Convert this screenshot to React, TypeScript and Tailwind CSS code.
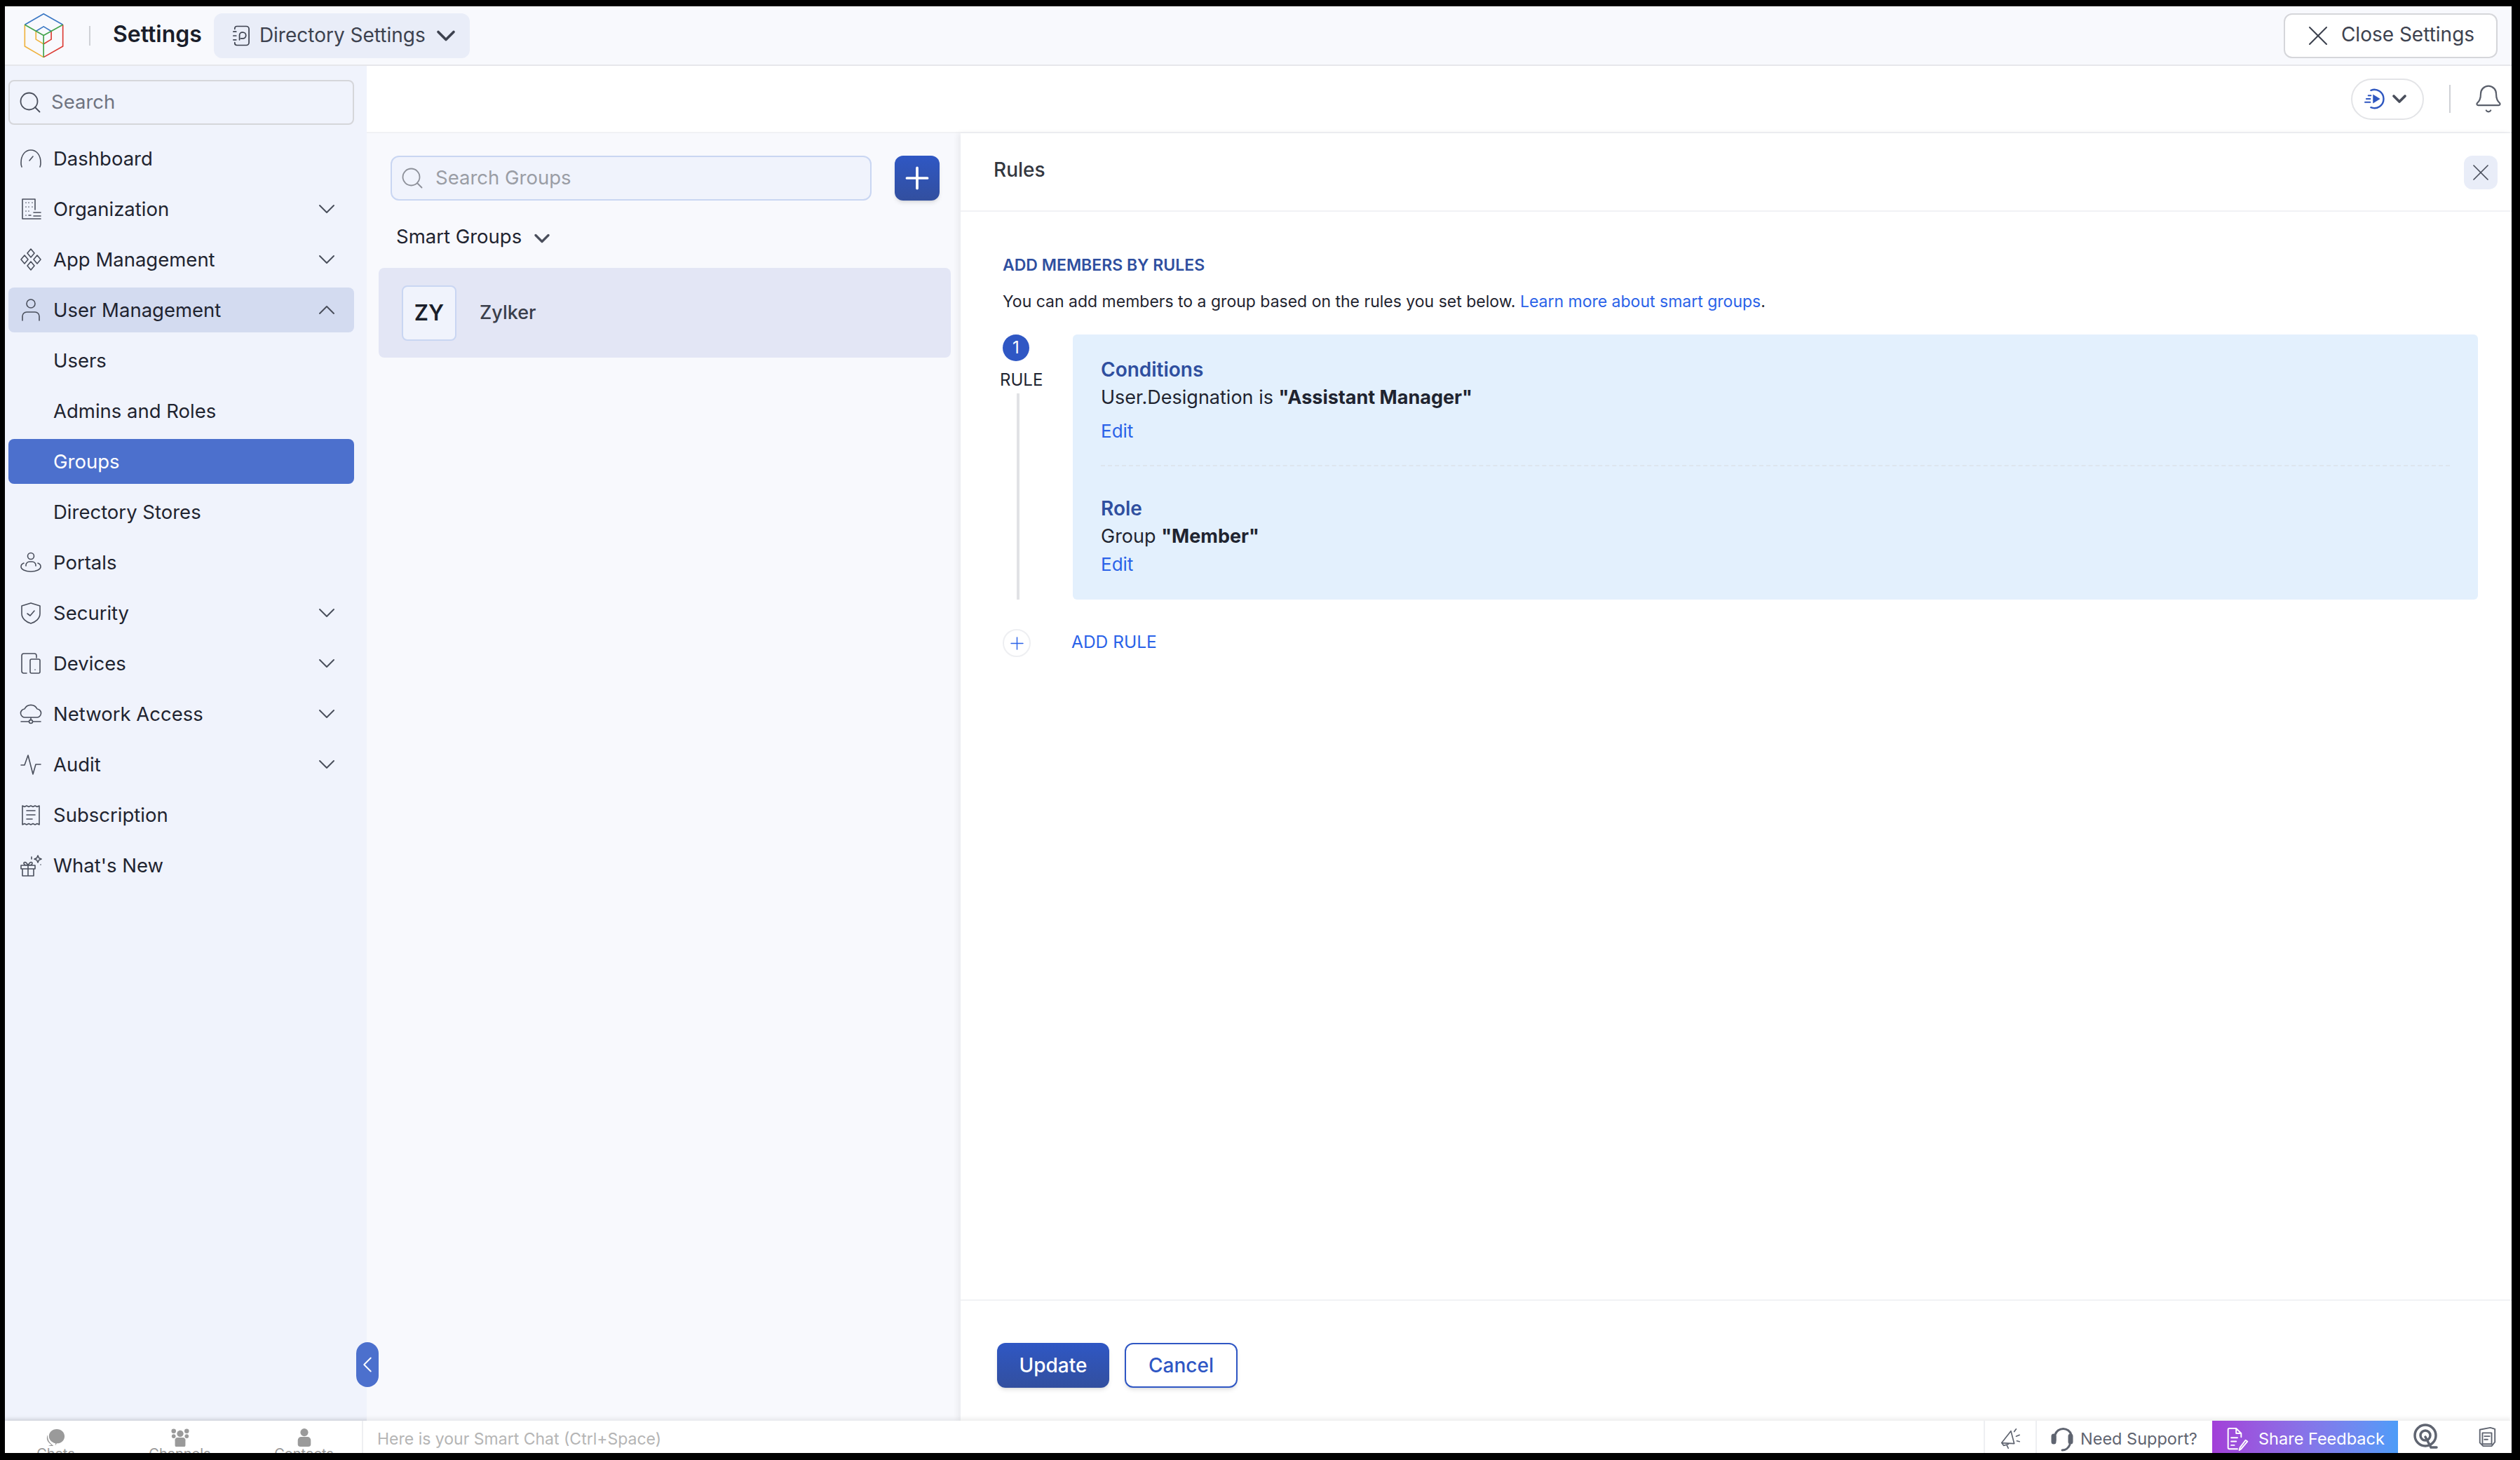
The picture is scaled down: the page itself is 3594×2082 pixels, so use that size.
import { Bell, ChevronDown, ChevronLeft, ChevronUp, Plus, Search, X } from "lucide-react";
import type { ReactNode } from "react";

type NavItem = {
	label: string;
	icon?: ReactNode;
	arrow?: "down" | "up";
	state?: "open" | "active";
};

function Ico({ children }: { children: ReactNode }) {
	return (
		<svg
			viewBox="0 0 32 32"
			fill="none"
			stroke="#4a4f5c"
			strokeWidth="1.6"
			strokeLinecap="round"
			strokeLinejoin="round"
			className="w-8 h-8 shrink-0"
		>
			{children}
		</svg>
	);
}

const navItems: NavItem[] = [
	{
		label: "Dashboard",
		icon: (
			<Ico>
				<path d="M3 28a13.500 13.500 0 0 1-1-6C2 11 8 4 16 4s14 7 14 18a13.500 13.500 0 0 1-1 6M14 19l5-6" />
			</Ico>
		),
	},
	{
		label: "Organization",
		arrow: "down",
		icon: (
			<Ico>
				<path d="M22 17V2H4v28h26M9 7v.1M13 7v.1M18 7v.1M9 13v.1M13 13v.1M18 13v.1M9 19v.1M13 19v.1M9 25v.1M20 21h10M20 26h10M13 25h3" />
			</Ico>
		),
	},
	{
		label: "App Management",
		arrow: "down",
		icon: (
			<Ico>
				<path d="M16 1l5 6-5 6-5-6zM16 19l5 6-5 6-5-6zM7 10l5 6-5 6-5-6zM25 10l5 6-5 6-5-6z" />
			</Ico>
		),
	},
	{
		label: "User Management",
		arrow: "up",
		state: "open",
		icon: (
			<Ico>
				<circle cx="16" cy="7" r="6" />
				<path d="M4 31v-6a6 6 0 0 1 6-6h12a6 6 0 0 1 6 6v6" />
			</Ico>
		),
	},
	{ label: "Users" },
	{ label: "Admins and Roles" },
	{ label: "Groups", state: "active" },
	{ label: "Directory Stores" },
	{
		label: "Portals",
		icon: (
			<Ico>
				<circle cx="16" cy="7" r="4.500" />
				<path d="M9 21v-1a5 5 0 0 1 5-5h4a5 5 0 0 1 5 5v1M6 17c-3 1-4 3-4 5 0 4 6 7 14 7s14-3 14-7c0-2-1-4-4-5" />
			</Ico>
		),
	},
	{
		label: "Security",
		arrow: "down",
		icon: (
			<Ico>
				<path d="M16 2l13 4v11c0 7-6 12-13 14C9 29 3 24 3 17V6zM11 17l4 3 6-7" />
			</Ico>
		),
	},
	{
		label: "Devices",
		arrow: "down",
		icon: (
			<Ico>
				<path d="M10 30H6a3 3 0 0 1-3-3V5a3 3 0 0 1 3-3h15a3 3 0 0 1 3 3v3" />
				<rect x="15" y="10" width="14" height="20" rx="2" />
				<path d="M22 25v.1" />
			</Ico>
		),
	},
	{
		label: "Network Access",
		arrow: "down",
		icon: (
			<Ico>
				<path d="M8 21a6 6 0 0 1-1-12 10 10 0 0 1 18 0 6 6 0 0 1-1 12zM16 21v4M2 27h11M19 27h11" />
				<circle cx="16" cy="27" r="2.500" />
			</Ico>
		),
	},
	{
		label: "Audit",
		arrow: "down",
		icon: (
			<Ico>
				<path d="M2 17h5l5-14 7 27 4-14h7" />
			</Ico>
		),
	},
	{
		label: "Subscription",
		icon: (
			<Ico>
				<path d="M4 3l3 1.500 3-1.500 3 1.500 3-1.500 3 1.500 3-1.500 3 1.500 3-1.500v27l-3-1.500-3 1.500-3-1.500-3 1.500-3-1.500-3 1.500-3-1.500-3 1.500zM10 10h12M10 16h12M10 22h8" />
			</Ico>
		),
	},
	{
		label: "What's New",
		icon: (
			<Ico>
				<path d="M2 16h20v5H2zM4 21v10h16V21M12 16v15M12 16c-3 0-6-1-6-3s3-3 6 3c3-6 6-5 6-3s-3 3-6 3" />
				<path d="M26 2l1.500 3.500L31 7l-3.500 1.500L26 12l-1.500-3.500L21 7l3.500-1.500zM17 4v3M30 15v.1" />
			</Ico>
		),
	},
];

function NavRow({ item }: { item: NavItem }) {
	const bg =
		item.state === "active"
			? "bg-[#4c70cd] text-white"
			: item.state === "open"
				? "bg-[#d3dbf0] text-[#1f2430]"
				: "text-[#1f2430]";
	return (
		<div className={`flex items-center h-16 rounded-lg pl-[16px] pr-[19px] ${bg}`}>
			<div className="w-[48px] shrink-0">{item.icon}</div>
			<span className="flex-1 pt-[1px] text-[27.5px]">{item.label}</span>
			{item.arrow === "down" && <ChevronDown className="w-10 h-10 text-[#4a4f5c]" strokeWidth={1.2} />}
			{item.arrow === "up" && <ChevronUp className="w-10 h-10 text-[#4a4f5c]" strokeWidth={1.2} />}
		</div>
	);
}

function Logo() {
	return (
		<svg viewBox="100 45 172 196" fill="none" strokeWidth="5" strokeLinejoin="round" className="w-[57px] h-[65px]">
			<path d="M104 97L185 50L268 97" stroke="#3b78c4" />
			<path d="M152 125L185 105L218 125" stroke="#3b78c4" />
			<path d="M152 125V160L185 180" stroke="#efb23e" />
			<path d="M104 97V190L185 237" stroke="#efb23e" />
			<path d="M268 97V190L185 237" stroke="#dc3b34" />
			<path d="M218 125V160L185 180" stroke="#dc3b34" />
			<path d="M104 97L185 143L268 97M185 143V237" stroke="#43a34b" />
		</svg>
	);
}

function Header() {
	return (
		<header className="flex items-center h-[85px] shrink-0 bg-[#f8f9fd] border-b-2 border-[#e6e7eb] pl-[27px] pr-5">
			<Logo />
			<div className="w-[2px] h-7 bg-[#cfd1d6] ml-[36px] mr-[32px]" />
			<span className="text-[32px] pb-[3px] font-semibold text-[#1a1e2a]">Settings</span>
			<div className="flex items-center h-16 w-[365px] ml-[17px] pl-[25px] rounded-xl bg-[#e9edf8]">
				<svg viewBox="0 0 28 32" fill="none" stroke="#3d424f" strokeWidth="1.8" strokeLinecap="round" className="w-[27px] h-8">
					<path d="M5 6V5a3 3 0 0 1 3-3h14a4 4 0 0 1 4 4v20a4 4 0 0 1-4 4H8a3 3 0 0 1-3-3v-1M3 10h4M3 16h4M3 22h4M12 22v-7a4 4 0 0 1 4-4h1a4 4 0 0 1 0 9h-3" />
				</svg>
				<span className="ml-[13px] pb-[2px] text-[28px] text-[#3d424f]">Directory Settings</span>
				<ChevronDown className="w-11 h-11 ml-[7px] text-[#3d424f]" strokeWidth={2} />
			</div>
			<div className="ml-auto flex items-center justify-center gap-[9px] w-[305px] h-16 pr-[8px] rounded-xl bg-white border-2 border-[#d5d6da]">
				<X className="w-12 h-12 text-[#3d424f]" strokeWidth={1} />
				<span className="text-[28px] pb-[3px] text-[#3d424f]">Close Settings</span>
			</div>
		</header>
	);
}

function Toolbar() {
	return (
		<div className="flex items-center justify-end h-[96px] shrink-0 bg-white border-b-2 border-[#f1f2f5] pr-[11px]">
			<div className="flex items-center justify-center gap-[2px] w-[104px] h-[59px] rounded-full border-2 border-[#e3e4e7]">
				<svg viewBox="0 0 34 34" fill="none" stroke="#2f57c0" strokeWidth="2.6" strokeLinecap="round" className="w-8 h-8">
					<path d="M10 4a14 14 0 1 1 0 26" />
					<path d="M13 10l11 7-11 7z" fill="#2f57c0" stroke="none" />
					<path d="M6 12h4M3 17h6M1 22h8" strokeWidth="2" />
				</svg>
				<ChevronDown className="w-8 h-8 text-[#4a4f5c]" strokeWidth={2.8} />
			</div>
			<div className="w-[2px] h-10 bg-[#cfd1d6] ml-[36px] mr-[32px]" />
			<Bell className="w-11 h-11 text-[#5a5f6b]" strokeWidth={1.2} />
		</div>
	);
}

function GroupList() {
	return (
		<div className="w-[847px] shrink-0 bg-[#f8f9fd] pt-8 pl-[17px] pr-[14px]">
			<div className="flex items-center pl-[17px] pr-[16px]">
				<div className="flex-1 flex items-center h-16 rounded-xl border-2 border-[#c9d6f2] bg-[#f0f3fc] pl-[11px]">
					<Search className="w-9 h-9 text-[#8d9099]" strokeWidth={1.2} />
					<span className="ml-[15px] text-[27.5px] text-[#9a9da5]">Search Groups</span>
				</div>
				<div className="flex items-center justify-center w-16 h-16 ml-[33px] rounded-xl bg-gradient-to-b from-[#2f57c4] to-[#324f9f] shadow-md">
					<Plus className="w-[50px] h-[50px] text-white" strokeWidth={1.8} />
				</div>
			</div>
			<div className="flex items-center h-[96px] pl-[25px] pt-[8px]">
				<span className="text-[27.5px] text-[#1f2430]">Smart Groups</span>
				<ChevronDown className="w-9 h-9 ml-[11px] mt-1 text-[#4a4f5c]" strokeWidth={2.2} />
			</div>
			<div className="flex items-center h-[128px] rounded-lg bg-[#e3e6f5] pl-[33px]">
				<div className="flex items-center justify-center w-[78px] h-[79px] rounded-lg border-2 border-[#c9d6f2] bg-[#f0f3fc] text-[31px] font-semibold text-[#1a1e2a]">
					ZY
				</div>
				<span className="ml-[33px] text-[27px] font-medium text-[#3a3e4b]">Zylker</span>
			</div>
		</div>
	);
}

function Rules() {
	return (
		<div className="flex-1 flex flex-col min-w-0 bg-white shadow-[-4px_0_8px_rgba(0,0,0,0.06)]">
			<div className="flex items-center justify-between h-[112px] shrink-0 border-b-2 border-[#f1f2f5] pl-[47px] pr-[20px]">
				<span className="text-[28px] font-medium text-[#33373f] pb-[6px]">Rules</span>
				<div className="flex items-center justify-center w-12 h-12 rounded-xl bg-[#e9edf8] mt-[2px]">
					<X className="w-10 h-10 text-[#4a4f5c]" strokeWidth={1} />
				</div>
			</div>
			<div className="flex-1 pl-[60px] pr-[48px] pt-[58px]">
				<div className="text-[23px] leading-9 font-semibold text-[#2f4f9f]">ADD MEMBERS BY RULES</div>
				<div className="text-[23px] leading-9 mt-4 text-[#1f2430]">
					You can add members to a group based on the rules you set below.{" "}
					<span className="text-[#2a62e8]">Learn more about smart groups</span>.
				</div>
				<div className="flex mt-[29px]">
					<div className="flex flex-col w-[100px] shrink-0">
						<div className="flex items-center justify-center w-[38px] h-[38px] rounded-full bg-[#2f57c4] text-white text-[24px]">1</div>
						<span className="text-[24px] leading-8 mt-[11px] -ml-1 text-[#1f2430]">RULE</span>
						<div className="flex-1 w-1 ml-5 mt-[3px] bg-[#e1e2e5]" />
					</div>
					<div className="flex-1 h-[378px] rounded-md bg-[#e3f0fd] px-10 pt-8">
						<div className="text-[28px] leading-9 font-semibold text-[#2f4f9f]">Conditions</div>
						<div className="text-[27px] leading-9 mt-1 text-[#1f2430]">
							User.Designation is <b className="font-bold">"Assistant Manager"</b>
						</div>
						<div className="text-[26px] leading-9 mt-3 text-[#2a62e8]">Edit</div>
						<div className="border-b-2 border-dashed border-[#dde5ee] mt-[30px]" />
						<div className="text-[28px] leading-9 mt-[42px] font-semibold text-[#2f4f9f]">Role</div>
						<div className="text-[27px] leading-9 mt-1 text-[#1f2430]">
							Group <b className="font-bold">"Member"</b>
						</div>
						<div className="text-[26px] leading-9 mt-[4px] text-[#2a62e8]">Edit</div>
					</div>
				</div>
				<div className="flex items-center mt-[42px]">
					<div className="flex items-center justify-center w-10 h-10 rounded-full border-2 border-[#eeeff2]">
						<Plus className="w-[29px] h-[29px] text-[#2a62e8]" strokeWidth={1.2} />
					</div>
					<span className="ml-[58px] pb-1 text-[24.5px] text-[#2a62e8]">ADD RULE</span>
				</div>
			</div>
			<div className="flex items-center gap-[22px] h-[173px] shrink-0 border-t-2 border-[#f1f2f5] pl-[52px] pt-[12px]">
				<div className="flex items-center justify-center w-[160px] h-16 rounded-xl bg-gradient-to-b from-[#2f57c4] to-[#324f9f] text-white text-[28px] font-medium shadow-md">
					Update
				</div>
				<div className="flex items-center justify-center w-[161px] h-16 rounded-xl border-2 border-[#2f57c4] bg-white text-[#2f57c4] text-[28px] font-medium shadow-md">
					Cancel
				</div>
			</div>
		</div>
	);
}

function ChatTab({ label, children }: { label: string; children: ReactNode }) {
	return (
		<div className="flex flex-col items-center w-[177px] shrink-0 pt-[11px]">
			<svg viewBox="0 0 32 28" fill="#9a9a9a" className="w-8 h-[26px] shrink-0">
				{children}
			</svg>
			<span className="text-[20px] leading-[20px] shrink-0 text-[#9a9a9a]">{label}</span>
		</div>
	);
}

function BottomBar() {
	return (
		<footer className="flex h-[46px] shrink-0 overflow-hidden bg-white shadow-[0_-3px_6px_rgba(0,0,0,0.08)] relative">
			<div className="flex justify-center w-[511px] shrink-0 overflow-hidden border-r-2 border-[#eeeff2] pr-[10px]">
				<ChatTab label="Chats">
					<path d="M17 1c7 0 12 5 12 11s-5 11-12 11l-2 3v-3C9 21 5 17 5 12 5 6 10 1 17 1z" />
					<path d="M3 10c-3 6 0 12 6 15l-5 2 8 0-5-5c-3-3-4-7-4-12z" />
				</ChatTab>
				<ChatTab label="Channels">
					<circle cx="16" cy="8" r="5" />
					<circle cx="6" cy="4" r="3.500" />
					<circle cx="26" cy="4" r="3.500" />
					<circle cx="6" cy="12" r="3" />
					<circle cx="26" cy="12" r="3" />
					<path d="M8 19a4 4 0 0 1 4-5h8a4 4 0 0 1 4 5v7a2 2 0 0 1-2 2H10a2 2 0 0 1-2-2z" />
				</ChatTab>
				<ChatTab label="Contacts">
					<circle cx="16" cy="6" r="6" />
					<path d="M6 18a5 5 0 0 1 5-5h10a5 5 0 0 1 5 5v6a4 4 0 0 1-4 4H10a4 4 0 0 1-4-4z" />
				</ChatTab>
			</div>
			<div className="flex-1 flex items-center pl-[20px] pt-[6px] text-[23px] text-[#b5b5b5]">Here is your Smart Chat (Ctrl+Space)</div>
			<div className="flex items-center justify-center w-[74px] border-l-2 border-[#eeeff2] pt-1">
				<svg viewBox="0 0 34 34" fill="none" stroke="#5f6470" strokeWidth="1.8" strokeLinejoin="round" strokeLinecap="round" className="w-8 h-8">
					<path d="M4 24L18 6l5 19zM4 24l3 4 7-2M12 28l2 4M23 7l3-4M26 14l5-2M27 21l4 1" />
				</svg>
			</div>
			<div className="flex items-center w-[252px] border-l-2 border-[#eeeff2] pl-[20px] pt-[6px]">
				<svg viewBox="0 0 30 40" fill="none" stroke="#5f6470" strokeWidth="3" strokeLinecap="round" className="w-[32px] h-[40px]">
					<path d="M5 22v-8a12 12 0 0 1 23 0M26 28a12 12 0 0 1-11 8" />
					<rect x="1" y="14" width="4" height="12" rx="2" fill="#5f6470" />
					<rect x="25" y="14" width="4" height="12" rx="2" fill="#5f6470" />
				</svg>
				<span className="ml-[10px] text-[23.500px] text-[#5f6470]">Need Support?</span>
			</div>
			<div className="flex items-center w-[265px] bg-gradient-to-r from-[#a23fd8] to-[#4c9cf8] pl-5 pt-[6px]">
				<svg viewBox="0 0 36 40" fill="none" stroke="white" strokeWidth="2.2" strokeLinecap="round" strokeLinejoin="round" className="w-8 h-9">
					<path d="M18 36H5a2 2 0 0 1-2-2V5a2 2 0 0 1 2-2h11l8 8v6M16 3v8h8M8 18h10M8 24h8M8 30h5M24 36l-3 2 1-4 9-12 3 2z" />
				</svg>
				<span className="ml-[14px] text-[23.500px] text-white">Share Feedback</span>
			</div>
			<div className="flex items-center w-[90px] pl-[21px]">
				<svg viewBox="0 0 36 40" fill="none" stroke="#5f6470" strokeWidth="3.5" strokeLinecap="round" className="w-9 h-10">
					<circle cx="18" cy="18" r="15" />
					<circle cx="18" cy="18" r="7" />
					<path d="M18 20l8 15h8" />
				</svg>
			</div>
			<div className="flex items-center w-[72px] pl-[23px]">
				<svg viewBox="0 0 30 32" fill="none" stroke="#5f6470" strokeWidth="2" strokeLinecap="round" strokeLinejoin="round" className="w-[28px] h-[30px]">
					<path d="M4 5l16-3 7 2v20l-5 6H9l-5-5zM8 10h14v17H8zM11 15h8M11 20h5" />
				</svg>
			</div>
		</footer>
	);
}

export default function App() {
	return (
		<div className="h-[2082px] bg-black pt-[9px] pl-[7px] pr-3 pb-[10px] font-['Inter',sans-serif]">
			<div className="flex flex-col h-full overflow-hidden relative bg-white">
				<Header />
				<div className="flex flex-1 min-h-0">
					<aside className="w-[516px] shrink-0 bg-[#f0f3fc] pt-5 pl-[5px] pr-[18px] shadow-[inset_0_-6px_6px_-6px_rgba(0,0,0,0.12)]">
						<div className="flex items-center h-16 rounded-lg border-2 border-[#d5d6da] pl-[11px]">
							<Search className="w-9 h-9 text-[#4a4f5c]" strokeWidth={1.2} />
							<span className="ml-[12px] text-[27.5px] text-[#6f7380]">Search</span>
						</div>
						<nav className="flex flex-col gap-2 mt-[16px]">
							{navItems.map((item) => (
								<NavRow key={item.label} item={item} />
							))}
						</nav>
					</aside>
					<div className="flex-1 flex flex-col min-w-0">
						<Toolbar />
						<div className="flex flex-1 min-h-0">
							<GroupList />
							<Rules />
						</div>
					</div>
				</div>
				<BottomBar />
				<div className="absolute left-[501px] top-[1905px] flex items-center justify-center w-8 h-16 rounded-full bg-[#4c70cd]">
					<ChevronLeft className="w-[38px] h-[38px] shrink-0 text-white" strokeWidth={1.2} />
				</div>
			</div>
		</div>
	);
}
